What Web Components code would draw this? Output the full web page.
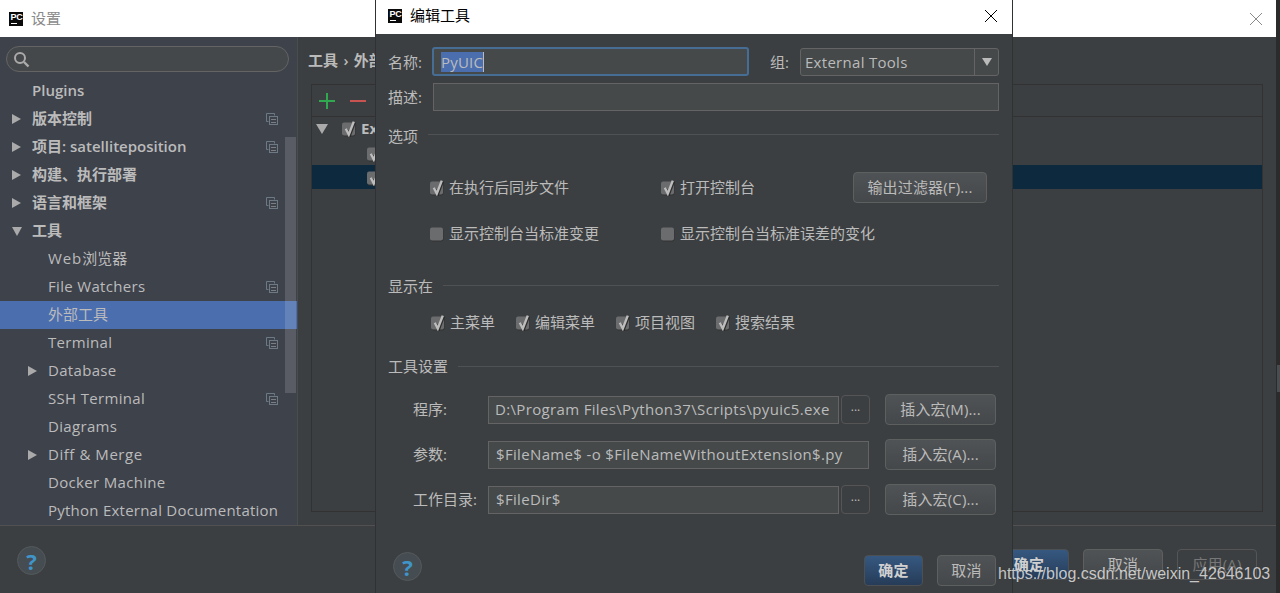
<!DOCTYPE html>
<html lang="zh"><head><meta charset="utf-8"><title>设置</title>
<style>
html,body{margin:0;padding:0;height:100%;overflow:hidden;background:#2b2b2b}
body{font:15px/20px "Open Sans","Noto Sans CJK SC",sans-serif;color:#bbb}
</style></head><body>
<x-desktop></x-desktop>
<script>
const CHECK_SVG = (on)=>`<svg width="17" height="18" viewBox="0 0 17 18" style="display:block">
<rect x="1.5" y="4.5" width="13" height="13" rx="2" fill="#323232"/>
<rect x="1" y="3.5" width="13" height="13" rx="2" fill="#6a6c6e"/>
${on?`<path d="M4.8 9.8l3 5.8 5-13" fill="none" stroke="#1f1f1f" stroke-width="2.4" transform="translate(1 1)" opacity=".8"/><path d="M4.8 9.8l3 5.8 5-13" fill="none" stroke="#bdbdbd" stroke-width="2.4"/>`:''}</svg>`;
const def=(name,render,css='')=>customElements.define(name,class extends HTMLElement{
  connectedCallback(){ if(this.shadowRoot) return;
    const r=this.attachShadow({mode:'open'});
    r.innerHTML=`<style>${css}</style>`+render(this);}
});
const a=(el,n,d='')=>el.hasAttribute(n)?(el.getAttribute(n)||true):d;

def('x-pc-logo',()=>`<span class="p">PC</span><i></i>`,
`:host{display:block;position:relative;width:14px;height:14px;background:#0a0a0a;overflow:hidden;flex:none}
.p{display:block;font:700 9px/10px "Liberation Sans",sans-serif;color:#fff;padding:0 0 0 1.5px;letter-spacing:-.2px}
i{display:block;width:6px;height:1px;margin:1px 0 0 2px;background:#fff}`);

def('x-close',el=>`<svg width="14" height="14" viewBox="0 0 14 14" style="display:block"><path d="M1 1l12 12M13 1L1 13" stroke="${a(el,'color','#000')}" stroke-width="1" fill="none"/></svg>`,
`:host{display:block;flex:none}`);

def('x-check',el=>`${CHECK_SVG(el.hasAttribute('on'))}<span><slot></slot></span>`,
`:host{display:flex;align-items:center;height:20px;white-space:nowrap}
svg{flex:none;margin-right:3px;margin-top:-2px}
span{color:#bbb;margin-top:-2px}`);

def('x-btn',el=>`<slot></slot>`,
`:host{display:flex;align-items:center;justify-content:center;box-sizing:border-box;height:31px;padding-bottom:2px;border:1px solid #5e6060;border-radius:4px;background:linear-gradient(#505355,#45484a);color:#bbb;white-space:nowrap;letter-spacing:.15px}
:host([default]){background:linear-gradient(#365880,#263c58);border-color:#4c5052;color:#d0d0d0;font-weight:700}
:host([disabled]){background:none;border-color:#555;color:#777}
:host([small]){height:29px;background:none;border-color:#555;letter-spacing:0;font-size:12px;line-height:12px;padding-bottom:5px}`);

def('x-field',el=>`<slot></slot>`,
`:host{display:flex;align-items:center;box-sizing:border-box;height:28px;border:1px solid #646464;background:#45494a;color:#bbb;padding:0 7px 2px;white-space:nowrap;overflow:hidden;letter-spacing:.34px}
:host([focus]){height:29px;border:2px solid #466d94;border-radius:3px;background:#45494a;padding:0 7px;letter-spacing:.2px}`);

def('x-combo',el=>`<span class="t"><slot></slot></span><span class="a"><svg width="12" height="10" viewBox="0 0 12 10"><path d="M1 1h10L6 9z" fill="#bbb"/></svg></span>`,
`:host{display:flex;box-sizing:border-box;height:28px;border:1px solid #646464;border-radius:3px;background:#45494a;color:#bbb}
.t{flex:1;padding:0 4px;line-height:26px;white-space:nowrap;letter-spacing:.29px}
.a{flex:none;width:23px;display:flex;align-items:center;justify-content:center;border-left:1px solid #646464}`);

def('x-heading',el=>`<span><slot></slot></span><i></i>`,
`:host{display:flex;align-items:center;height:20px;color:#bbb}
i{flex:1;height:1px;background:#505152;margin:0 0 var(--off,2px) 10px}`);

def('x-help',()=>`<span>?</span>`,
`:host{display:flex;align-items:center;justify-content:center;box-sizing:border-box;width:29px;height:29px;border-radius:50%;border:1px solid #54595c;background:#464d52;flex:none}
span{font:700 22px/22px "Open Sans",sans-serif;color:#3f95c9}`);

def('x-cfg-icon',()=>`<svg width="12" height="12" viewBox="0 0 12 12" style="display:block"><path d="M8.5 2.5v-2h-8v8h2" fill="none" stroke="#6d7a85"/><rect x="3.5" y="3.5" width="8" height="8" fill="#3e424b" stroke="#6d7a85"/><path d="M5 6.5h5M5 9.5h5" stroke="#7b7f84"/></svg>`,
`:host{display:block;flex:none}`);

def('x-tree-row',el=>{
  const arrow=a(el,'arrow');
  const tri=arrow==='down'
    ?`<svg width="12" height="12" viewBox="0 0 12 12"><path d="M1 2h10L6 11z" fill="#aaa"/></svg>`
    :arrow==='right'?`<svg width="12" height="12" viewBox="0 0 12 12"><path d="M1 1l9 5-9 5z" fill="#aaa"/></svg>`:'';
  return `<span class="tw">${tri}</span><span class="l"><slot></slot></span>${el.hasAttribute('cfg')?'<x-cfg-icon></x-cfg-icon>':''}`;
},
`:host{display:flex;align-items:center;height:28px;box-sizing:border-box;padding-left:11px;padding-right:19px;white-space:nowrap;color:#bbb}
:host([depth="1"]){padding-left:27px;letter-spacing:.32px}
:host([top]){font-weight:600}
:host([sel]){background:#4b6eaf}
.tw{width:21px;flex:none;display:flex;align-items:center;margin-top:-1px}
.l{flex:1;margin-top:-2px}`);

def('x-tool-row',el=>`<span class="lb"><slot name="label"></slot></span><slot></slot>`,
`:host{display:flex;align-items:center;height:31px}
.lb{flex:none;width:75px;padding-left:25px;white-space:nowrap;margin-top:-2px}
::slotted(x-field){flex:1;min-width:0}
::slotted([more]){flex:none;width:29px;margin-left:2px}
::slotted([ins]){flex:none;width:111px;margin-left:15px}
::slotted([ins].wide){margin-left:16px}`);

def('x-settings',()=>`
<div class="tb"><x-pc-logo></x-pc-logo><span class="ttl">设置</span><x-close color="#8a8a8a"></x-close></div>
<div class="main">
  <aside>
    <div class="search"><svg width="17" height="17" viewBox="0 0 17 17"><circle cx="7" cy="7" r="5" fill="none" stroke="#aaa" stroke-width="2"/><path d="M11 11l4.5 4.5" stroke="#aaa" stroke-width="2.4"/></svg></div>
    <div class="tree">
      <x-tree-row top>Plugins</x-tree-row>
      <x-tree-row top arrow="right" cfg>版本控制</x-tree-row>
      <x-tree-row top arrow="right" cfg>项目: satelliteposition</x-tree-row>
      <x-tree-row top arrow="right">构建、执行部署</x-tree-row>
      <x-tree-row top arrow="right" cfg>语言和框架</x-tree-row>
      <x-tree-row top arrow="down">工具</x-tree-row>
      <x-tree-row depth="1"><span style="letter-spacing:.9px">Web</span><span style="letter-spacing:0">浏览器</span></x-tree-row>
      <x-tree-row depth="1" cfg>File Watchers</x-tree-row>
      <x-tree-row depth="1" sel style="letter-spacing:0">外部工具</x-tree-row>
      <x-tree-row depth="1" cfg>Terminal</x-tree-row>
      <x-tree-row depth="1" arrow="right">Database</x-tree-row>
      <x-tree-row depth="1" cfg>SSH Terminal</x-tree-row>
      <x-tree-row depth="1">Diagrams</x-tree-row>
      <x-tree-row depth="1" arrow="right" style="letter-spacing:.55px">Diff &amp; Merge</x-tree-row>
      <x-tree-row depth="1">Docker Machine</x-tree-row>
      <x-tree-row depth="1" style="letter-spacing:.24px">Python External Documentation</x-tree-row>
    </div>
    <div class="sb"></div>
  </aside>
  <section>
    <div class="crumb">工具 › 外部</div>
    <div class="panel">
      <div class="tools">
        <svg width="16" height="16" viewBox="0 0 16 16"><path d="M8 0v16M0 8h16" stroke="#2fa84f" stroke-width="2"/></svg>
        <svg width="16" height="16" viewBox="0 0 16 16"><path d="M0 8h16" stroke="#c75450" stroke-width="2"/></svg>
      </div>
      <div class="row r0"><svg width="12" height="12" viewBox="0 0 12 12"><path d="M0 1h12L6 11z" fill="#aaa"/></svg>${CHECK_SVG(true)}<b>Ex</b></div>
      <div class="row r1">${CHECK_SVG(true)}</div>
      <div class="row r1 sel">${CHECK_SVG(true)}</div>
    </div>
  </section>
</div>
<footer><x-help></x-help><span class="btns"><x-btn default>确定</x-btn><x-btn>取消</x-btn><x-btn disabled>应用(A)</x-btn></span></footer>`,
`:host{position:absolute;left:0;top:0;width:1276px;height:593px;display:flex;flex-direction:column;background:#3c3f41;color:#bbb}
.tb{flex:none;height:37px;background:#fff;display:flex;align-items:center;padding:0 13px 0 9px;box-sizing:border-box}
.ttl{flex:1;margin:-2px 0 0 8px;color:#8a8a8a}
.main{flex:none;height:488px;display:flex}
aside{position:relative;flex:none;width:297px;background:#3e424b;border-right:1px solid #4a4d4f}
.search{box-sizing:border-box;height:26px;margin:9px 8px 5px 6px;border:1px solid #646464;border-radius:13px;background:#45484a;display:flex;align-items:center;padding-left:6px}
.tree{display:block}
.sb{position:absolute;left:285px;top:100px;width:11px;height:256px;background:rgba(255,255,255,.14)}
section{flex:1;min-width:0}
.crumb{margin:13px 0 14px 10px;height:20px;white-space:nowrap;font-weight:600;word-spacing:1.5px}
.panel{box-sizing:border-box;margin:0 13px 0 13px;height:428px;border:1px solid #323232}
.tools{box-sizing:border-box;height:32px;border-bottom:1px solid #323232;display:flex;align-items:center;gap:15px;padding-left:7px}
.row{height:24px;display:flex;align-items:center;white-space:nowrap;overflow:hidden}
.r0{padding-left:4px}.r0 svg:nth-child(2){margin:-2px 3px 0 13px}
.r0 b{color:#bbb;margin-top:-2px;font-weight:700}
.r1{padding-left:54px}
.sel{background:#0d293e}
footer{flex:1;box-sizing:border-box;border-top:1px solid #515151;display:flex;justify-content:space-between;padding:20px 19px 0 17px}
.btns{display:flex;gap:14px;margin-top:3px;height:31px}
.btns x-btn{width:80px}`);

def('x-tool-dialog',()=>`
<div class="tb"><x-pc-logo></x-pc-logo><span class="ttl">编辑工具</span><x-close></x-close></div>
<div class="body">
  <div class="r1"><span class="l" style="width:44px">名称:</span><x-field focus style="width:317px;flex:none"><span class="selt">PyUIC</span><i class="caret"></i></x-field><span class="l" style="width:30px;margin-left:21px">组:</span><x-combo style="flex:1">External Tools</x-combo></div>
  <div class="r2"><span class="l" style="width:45px">描述:</span><x-field style="flex:1"></x-field></div>
  <x-heading style="margin-top:15px;--off:4px">选项</x-heading>
  <div class="opts">
    <x-check on>在执行后同步文件</x-check><x-check on>打开控制台</x-check><x-btn style="width:134px;justify-self:end">输出过滤器(F)...</x-btn>
    <x-check>显示控制台当标准变更</x-check><x-check>显示控制台当标准误差的变化</x-check><span></span>
  </div>
  <x-heading style="margin-top:27px">显示在</x-heading>
  <div class="show"><x-check on>主菜单</x-check><x-check on>编辑菜单</x-check><x-check on>项目视图</x-check><x-check on>搜索结果</x-check></div>
  <x-heading style="margin-top:23px;--off:0px">工具设置</x-heading>
  <div class="tools">
    <x-tool-row><span slot="label">程序:</span><x-field style="padding-left:6px">D:\\Program Files\\Python37\\Scripts\\pyuic5.exe</x-field><x-btn small more>...</x-btn><x-btn ins>插入宏(M)...</x-btn></x-tool-row>
    <x-tool-row><span slot="label">参数:</span><x-field>$FileName$ -o $FileNameWithoutExtension$.py</x-field><x-btn ins class="wide">插入宏(A)...</x-btn></x-tool-row>
    <x-tool-row><span slot="label">工作目录:</span><x-field>$FileDir$</x-field><x-btn small more>...</x-btn><x-btn ins>插入宏(C)...</x-btn></x-tool-row>
  </div>
  <div class="foot"><x-help></x-help><span class="btns"><x-btn default>确定</x-btn><x-btn>取消</x-btn></span></div>
</div>`,
`:host{position:absolute;left:375px;top:0;width:638px;height:593px;box-sizing:border-box;border-left:1px solid #2f3133;border-right:1px solid #2f3133;background:#3c3f41;color:#bbb;display:flex;flex-direction:column}
.tb{flex:none;height:34px;background:#fff;display:flex;align-items:center;padding:0 14px 3px 12px;box-sizing:border-box;color:#000}
.ttl{flex:1;margin:-2px 0 0 8px}
.body{flex:1;padding:0 13px 0 12px}
.r1,.r2{display:flex;align-items:center}
.r1{margin-top:13px;height:29px}
.r2{margin-top:7px;height:28px}
.l{flex:none;white-space:nowrap}
.selt{background:#4b6eaf;color:#bbb;line-height:20px;display:inline-block}
.caret{display:inline-block;width:1px;height:20px;background:#bbb}
.opts{display:grid;grid-template-columns:231px 192px 1fr;grid-auto-rows:31px;row-gap:15px;align-items:center;margin:26px 12px 0 41px}
.show{display:flex;gap:20px;margin:17px 0 0 42px}
.tools{margin:18px 3px 0 0;display:grid;row-gap:14px}
.foot{display:flex;justify-content:space-between;margin:37px 3px 0 5px}
.btns{display:flex;gap:14px;margin-top:3px}
.btns x-btn{width:59px}`);

def('x-watermark',()=>`https://blog.csdn.net/weixin_42646103`,
`:host{position:absolute;left:998px;top:564px;font:16px/20px "Liberation Sans",sans-serif;color:rgba(235,235,235,.82);white-space:nowrap;text-shadow:0 0 1px rgba(0,0,0,.3)}`);

def('x-desktop',()=>`<i class="thumb"></i><x-settings></x-settings><x-tool-dialog></x-tool-dialog><x-watermark></x-watermark>`,
`:host{display:block;position:relative;width:1280px;height:593px;overflow:hidden;background:#2b2b2b}
.thumb{position:absolute;left:1277px;top:365px;width:3px;height:27px;background:#4a4d50}`);
</script>
</body></html>
